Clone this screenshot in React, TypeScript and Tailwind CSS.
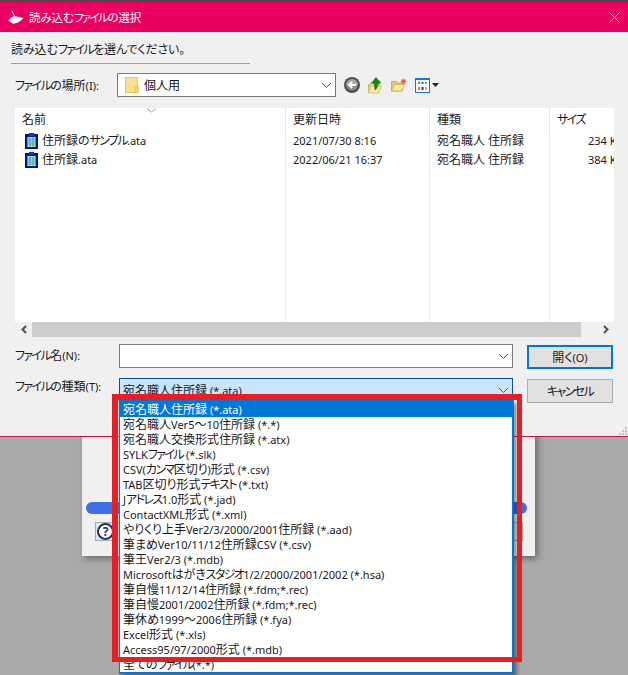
import React from "react";

const font = "[font-family:'Noto_Sans','Noto_Sans_CJK_JP',sans-serif] [font-feature-settings:'palt']";

// Mixed Japanese / Latin run: the reference font has narrower Latin and kana than Noto CJK.
const T = ({ children }: { children: string }) => (
  <>
    {children.split(/([\x20-\x7e]+|[\u30a0-\u30ff]+|[\u3040-\u309f\u3002]+)/).filter(Boolean).map((part, i) => {
      const latin = /^[\x20-\x7e]/.test(part);
      const kata = /^[\u30a0-\u30ff]/.test(part);
      const hira = /^[\u3040-\u309f\u3002]/.test(part);
      const cls = latin ? "text-[11px]" : kata ? "tracking-[-1.600px]" : hira ? "tracking-[-0.150px]" : "";
      return (
        <span key={i} className={cls}>
          {part}
        </span>
      );
    })}
  </>
);

const Chevron = () => (
  <svg width="11" height="7" viewBox="0 0 11 7" className="shrink-0">
    <path d="M1 1l4.500 4.500L10 1" fill="none" stroke="#555" strokeWidth="1" />
  </svg>
);

const AtaIcon = () => (
  <svg width="13" height="16" viewBox="0 0 13 16" className="shrink-0">
    <rect x="0.500" y="1.500" width="12" height="14" fill="#0a1a9a" stroke="#06106a" />
    <rect x="4" y="0" width="5" height="3" fill="#1430d0" />
    <rect x="2.500" y="4" width="8" height="10" fill="#d8f4f0" />
    <path d="M3 6h7M3 8h7M3 10h7M3 12h7M5 4v10M8 4v10" stroke="#35a8a0" strokeWidth="1" />
  </svg>
);

const FolderIcon = () => (
  <svg width="14" height="16" viewBox="0 0 14 16" className="shrink-0">
    <rect x="0.500" y="0.500" width="12" height="15" fill="#fbe08c" stroke="#e8c666" />
    <path d="M10 15.500v-6h3.500v6z" fill="#f7d678" stroke="#dcb658" strokeWidth="0.6" />
  </svg>
);

const BackIcon = () => (
  <svg width="16" height="16" viewBox="0 0 16 16">
    <circle cx="8" cy="8" r="8" fill="#4f4f4f" />
    <circle cx="8" cy="8" r="5.600" fill="#8b8b8b" />
    <path d="M2 8a6 6 0 0 1 12 0z" fill="#a6a6a6" />
    <path d="M12 8H6M8.200 5L5 8l3.200 3" fill="none" stroke="#fff" strokeWidth="1.800" />
  </svg>
);

const UpIcon = () => (
  <svg width="14" height="17" viewBox="0 0 14 17">
    <path d="M0.500 7.500l3-1h8l-1.500 9h-9z" fill="#f3d67c" stroke="#b89a48" strokeWidth="0.8" />
    <path d="M0.500 16l2-7h11l-3 7z" fill="#fbe79f" stroke="#c9aa54" strokeWidth="0.6" />
    <path d="M7 13c-.5-2.500-.5-5-1-7H3.500L8 0.500 13 6h-3c0 2.500-.5 5-3 7z" fill="#128a12" stroke="#0b6a0b" strokeWidth="0.5" />
  </svg>
);

const NewFolderIcon = () => (
  <svg width="16" height="14" viewBox="0 0 16 14">
    <path d="M0.500 13V3.500h5l1 1.500h5v8z" fill="#eccb70" stroke="#b89a48" strokeWidth="0.7" />
    <path d="M0.500 13l3-6.500h10L10.500 13z" fill="#fbe79f" stroke="#c9aa54" strokeWidth="0.7" />
    <path d="M12.500 0v7M9 3.500h7M10 1l5 5M15 1l-5 5" stroke="#f6a65c" strokeWidth="0.7" />
    <circle cx="12.500" cy="3.500" r="2.200" fill="#f2612a" />
  </svg>
);

const ViewIcon = () => (
  <svg width="15" height="15" viewBox="0 0 15 15">
    <rect x="0.500" y="0.500" width="14" height="14" fill="#fff" stroke="#1c74d4" />
    <rect x="0" y="0" width="15" height="2" fill="#1c74d4" />
    <rect x="3" y="4" width="2" height="2" fill="#5a7fb8" />
    <rect x="6.500" y="4" width="2" height="2" fill="#2a5aa8" />
    <rect x="10" y="4" width="2" height="2" fill="#3fa0d8" />
    <rect x="3" y="9" width="2" height="3" fill="#e8703a" />
    <rect x="6.500" y="9" width="2" height="3" fill="#1a3a80" />
    <rect x="10" y="9" width="2" height="3" fill="#e0b030" />
  </svg>
);

const AppLogo = () => (
  <svg width="16" height="15" viewBox="0 0 16 15" className="shrink-0">
    <path d="M4 1l3 6" stroke="#fff" strokeWidth="1" />
    <path d="M0.500 10.500C3 7 6 5.500 9 6.500l6.500 1.500C13 11 9 14 4.500 13.500z" fill="#fff" />
  </svg>
);

const rows = [
  ["住所録のサンプル.ata", "2021/07/30 8:16", "宛名職人 住所録", "234 KB"],
  ["住所録.ata", "2022/06/21 16:37", "宛名職人 住所録", "384 KB"],
];

const options = [
  "宛名職人住所録 (*.ata)",
  "宛名職人Ver5〜10住所録 (*.*)",
  "宛名職人交換形式住所録 (*.atx)",
  "SYLKファイル (*.slk)",
  "CSV(カンマ区切り)形式 (*.csv)",
  "TAB区切り形式テキスト (*.txt)",
  "Jアドレス1.0形式 (*.jad)",
  "ContactXML形式 (*.xml)",
  "やりくり上手Ver2/3/2000/2001住所録 (*.aad)",
  "筆まめVer10/11/12住所録CSV (*.csv)",
  "筆王Ver2/3 (*.mdb)",
  "Microsoftはがきスタジオ1/2/2000/2001/2002 (*.hsa)",
  "筆自慢11/12/14住所録 (*.fdm;*.rec)",
  "筆自慢2001/2002住所録 (*.fdm;*.rec)",
  "筆休め1999〜2006住所録 (*.fya)",
  "Excel形式 (*.xls)",
  "Access95/97/2000形式 (*.mdb)",
  "全てのファイル(*.*)",
];

const cols = "grid grid-cols-[271px_144px_120px_64px]";

export default function App() {
  return (
    <div className={`${font} relative h-[675px] w-[628px] overflow-hidden bg-[#a9a9a9] text-[12px] leading-[15px] text-[#1a1a1a]`}>
      <div className="h-[2px] bg-[#4a4a4a]" />
      <div className="relative z-10 flex h-[435px] flex-col border-b border-[#d0104f] bg-[#f0f0f0]">
        <div className="flex h-[30px] shrink-0 items-center bg-[#ea0060] pl-[8px] pr-[8px] text-[11.500px] text-white">
          <AppLogo />
          <span className="ml-[5px]"><T>読み込むファイルの選択</T></span>
          <svg width="11" height="11" viewBox="0 0 11 11" className="ml-auto">
            <path d="M0.500 0.500l10 10M10.500 0.500l-10 10" stroke="#fff" strokeWidth="1" />
          </svg>
        </div>

        <div className="pl-[11px] pt-[10px]">
          <div><T>読み込むファイルを選んでください。</T></div>
          <div className="mt-[6px] h-px w-[239px] bg-[#a0a0a0]" />
        </div>

        <div className="mt-[9px] flex h-[24px] items-center pl-[15px]">
          <span className="w-[102px]"><T>ファイルの場所(I):</T></span>
          <div className="flex h-[24px] w-[219px] items-center border border-[#7a7a7a] bg-white pl-[7px] pr-[3px]">
            <FolderIcon />
            <span className="ml-[5px] text-[#111]">個人用</span>
            <span className="ml-auto"><Chevron /></span>
          </div>
          <div className="ml-[8px] flex items-center">
            <BackIcon />
            <span className="ml-[8px] flex"><UpIcon /></span>
            <span className="ml-[9px] flex"><NewFolderIcon /></span>
            <span className="ml-[8px] flex"><ViewIcon /></span>
            <svg width="7" height="4" viewBox="0 0 7 4" className="ml-[2px]"><path d="M0 0h7L3.500 4z" fill="#222" /></svg>
          </div>
        </div>

        <div className="relative ml-[15px] mt-[11px] flex h-[214px] w-[599px] flex-col overflow-hidden bg-white">
          <svg width="11" height="5" viewBox="0 0 11 5" className="absolute left-[131px] top-0">
            <path d="M1 0.500l4.500 3.500L10 0.500" fill="none" stroke="#a0a0a0" />
          </svg>
          <div className={`${cols} h-[23px] shrink-0 items-center`}>
            {["名前", "更新日時", "種類", "サイズ"].map((h, i) => (
              <div key={h} className={`flex h-full items-center pl-[7px] ${i < 3 ? "border-r border-[#e5e5e5]" : ""}`}><span><T>{h}</T></span></div>
            ))}
          </div>
          <div className={`${cols} flex-1`}>
            <div className="border-r border-[#e3eefa]">
              {rows.map((r) => (
                <div key={r[0]} className="flex h-[19px] items-center pl-[10px]">
                  <AtaIcon />
                  <span className="ml-[4px]"><T>{r[0]}</T></span>
                </div>
              ))}
            </div>
            <div className="border-r border-[#e3eefa]">
              {rows.map((r) => (
                <div key={r[0]} className="flex h-[19px] items-center pl-[7px]"><span><T>{r[1]}</T></span></div>
              ))}
            </div>
            <div className="border-r border-[#e3eefa]">
              {rows.map((r) => (
                <div key={r[0]} className="flex h-[19px] items-center pl-[7px]"><span><T>{r[2]}</T></span></div>
              ))}
            </div>
            <div className="overflow-hidden">
              {rows.map((r) => (
                <div key={r[0]} className="flex h-[19px] items-center whitespace-nowrap pl-[38px]"><span><T>{r[3]}</T></span></div>
              ))}
            </div>
          </div>
        </div>

        <div className="ml-[15px] flex h-[15px] w-[599px] items-center">
          <div className="flex w-[17px] justify-center">
            <svg width="6" height="9" viewBox="0 0 6 9"><path d="M5 1L1.500 4.500 5 8" fill="none" stroke="#505050" strokeWidth="2" /></svg>
          </div>
          <div className="h-full w-[549px] bg-[#cdcdcd]" />
          <div className="ml-auto flex w-[17px] justify-center">
            <svg width="6" height="9" viewBox="0 0 6 9"><path d="M1 1l3.500 3.500L1 8" fill="none" stroke="#505050" strokeWidth="2" /></svg>
          </div>
        </div>

        <div className="mt-[7px] flex pl-[15px]">
          <div className="flex w-[104px] flex-col">
            <span className="mt-[4px] h-[15px]"><T>ファイル名(N):</T></span>
            <span className="mt-[16px] h-[15px]"><T>ファイルの種類(T):</T></span>
          </div>
          <div className="flex w-[394px] flex-col">
            <div className="flex h-[24px] items-center justify-end border border-[#7a7a7a] bg-white pr-[3px]"><Chevron /></div>
            <div className="mt-[10px] flex h-[24px] items-center border border-[#005499] bg-[#cce4f7] pl-[3px] pr-[3px]">
              <span><T>宛名職人住所録 (*.ata)</T></span>
              <span className="ml-auto"><Chevron /></span>
            </div>
          </div>
          <div className="ml-[14px] flex w-[86px] flex-col pt-[1px]">
            <button className="flex h-[24px] items-center justify-center border-2 border-[#0078d7] bg-[#e1e1e1]"><span><T>開く(O)</T></span></button>
            <button className="mt-[10px] flex h-[24px] items-center justify-center border border-[#adadad] bg-[#e1e1e1]"><span><T>キャンセル</T></span></button>
          </div>
        </div>

        <svg width="10" height="10" viewBox="0 0 10 10" className="absolute bottom-0 right-0">
          <path d="M7 1h2v2H7zM4 4h2v2H4zM7 4h2v2H7zM1 7h2v2H1zM4 7h2v2H4zM7 7h2v2H7z" fill="#c0c0c0" />
        </svg>
      </div>

      {/* Dialog behind the file picker */}
      <div className="absolute left-[82px] top-[430px] h-[126px] w-[453px] bg-[#f0f0f0] shadow-[3px_3px_6px_rgba(0,0,0,0.35)]">
        <div className="absolute left-[4px] top-[72px] h-[12px] w-[441px] rounded-full bg-[#3f6fe8]" />
        <div className="absolute left-[13px] top-[92px] flex h-[19px] w-[428px] items-center border border-[#a8a8a8] bg-[#e6e6e6] pl-[1px]">
          <span className="flex h-[17px] w-[17px] items-center justify-center rounded-full border-2 border-[#15346e] bg-white text-[12px] font-bold leading-none text-[#15346e]">?</span>
        </div>
      </div>

      {/* Open drop-down list */}
      <div className="absolute left-[119px] top-[400px] z-20 h-[274px] w-[395px] overflow-hidden border-2 border-l border-t-0 border-[#0078d7] bg-white shadow-[3px_3px_4px_rgba(0,0,0,0.4)]">
        {options.map((o, i) => (
          <div key={o} className={`whitespace-nowrap pl-[3px] ${i === 0 ? "h-[17px] bg-[#0078d7] pt-[2px] text-white" : "h-[15px]"}`}><T>{o}</T></div>
        ))}
      </div>

      {/* Red annotation frame */}
      <div className="absolute left-[112px] top-[394px] z-30 h-[268px] w-[410px] border-[6px] border-b-[5px] border-r-[5px] border-[#ed1c24]" />
    </div>
  );
}
